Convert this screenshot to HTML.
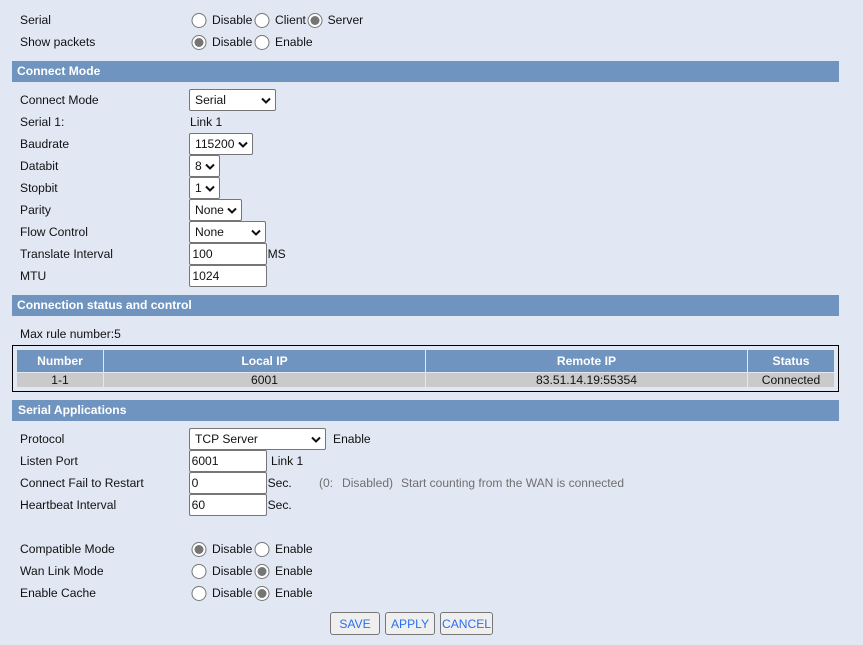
<!DOCTYPE html>
<html>
<head>
<meta charset="utf-8">
<style>
html,body{margin:0;padding:0;width:863px;height:645px;overflow:hidden;background:#e1e8f4;}
body{position:relative;font-family:"Liberation Sans","Noto Sans CJK SC",sans-serif;font-size:12.1px;color:#111;}
.t{position:absolute;line-height:22px;height:22px;white-space:pre;}
.g{color:#6f6f6f;}
.bar{position:absolute;left:12px;width:827px;height:21px;background:#6f94c0;color:#fff;font-weight:bold;line-height:20px;box-sizing:border-box;}
.r{position:absolute;width:15px;height:15px;box-sizing:border-box;border-radius:50%;border:1px solid #767676;background:#fff;transform:translateX(-.5px);}
.r.on::after{content:"";position:absolute;left:2px;top:2px;width:9px;height:9px;border-radius:50%;background:#757575;}
.s,.i{position:absolute;box-sizing:border-box;border:1px solid #767676;border-radius:2px;background:#fff;height:22px;line-height:20px;white-space:pre;}
.s{padding-left:5px;}
.i{padding-left:2.4px;}
.s svg{position:absolute;top:7px;right:3px;}
.b{position:absolute;top:612px;height:23px;box-sizing:border-box;border:1px solid #767676;border-radius:3px;background:#efefef;color:#2a6ff0;text-align:center;line-height:22px;white-space:pre;}
#tbl{position:absolute;left:12px;top:345px;width:827px;height:47px;box-sizing:border-box;border:1px solid #000;}
.c{position:absolute;text-align:center;white-space:pre;}
.h{top:350px;height:22px;line-height:22px;background:#6f94c0;color:#fff;font-weight:bold;}
.d{top:373px;height:14px;line-height:14px;background:#cacaca;}
</style>
</head>
<body>
<div class="t" style="left:20px;top:9px">Serial</div>
<span class="r" style="left:192px;top:13px"></span><div class="t" style="left:212px;top:9px">Disable</div>
<span class="r" style="left:255px;top:13px"></span><div class="t" style="left:275px;top:9px">Client</div>
<span class="r on" style="left:308px;top:13px"></span><div class="t" style="left:327.6px;top:9px">Server</div>

<div class="t" style="left:20px;top:31px">Show packets</div>
<span class="r on" style="left:192px;top:35px"></span><div class="t" style="left:212px;top:31px">Disable</div>
<span class="r" style="left:255px;top:35px"></span><div class="t" style="left:275px;top:31px">Enable</div>

<div class="bar" style="top:61px;padding-left:5px">Connect Mode</div>

<div class="t" style="left:20px;top:89px">Connect Mode</div>
<div class="s" style="left:189px;top:89px;width:87px">Serial<svg width="12" height="8" viewBox="0 0 12 8"><path d="M2 1.5 L6 5.5 L10 1.5" fill="none" stroke="#111" stroke-width="2"/></svg></div>
<div class="t" style="left:20px;top:111px">Serial 1:</div>
<div class="t" style="left:190px;top:111px">Link 1</div>
<div class="t" style="left:20px;top:133px">Baudrate</div>
<div class="s" style="left:189px;top:133px;width:64px">115200<svg width="12" height="8" viewBox="0 0 12 8"><path d="M2 1.5 L6 5.5 L10 1.5" fill="none" stroke="#111" stroke-width="2"/></svg></div>
<div class="t" style="left:20px;top:155px">Databit</div>
<div class="s" style="left:189px;top:155px;width:31px">8<svg width="12" height="8" viewBox="0 0 12 8"><path d="M2 1.5 L6 5.5 L10 1.5" fill="none" stroke="#111" stroke-width="2"/></svg></div>
<div class="t" style="left:20px;top:177px">Stopbit</div>
<div class="s" style="left:189px;top:177px;width:31px">1<svg width="12" height="8" viewBox="0 0 12 8"><path d="M2 1.5 L6 5.5 L10 1.5" fill="none" stroke="#111" stroke-width="2"/></svg></div>
<div class="t" style="left:20px;top:199px">Parity</div>
<div class="s" style="left:189px;top:199px;width:53px">None<svg width="12" height="8" viewBox="0 0 12 8"><path d="M2 1.5 L6 5.5 L10 1.5" fill="none" stroke="#111" stroke-width="2"/></svg></div>
<div class="t" style="left:20px;top:221px">Flow Control</div>
<div class="s" style="left:189px;top:221px;width:77px">None<svg width="12" height="8" viewBox="0 0 12 8"><path d="M2 1.5 L6 5.5 L10 1.5" fill="none" stroke="#111" stroke-width="2"/></svg></div>
<div class="t" style="left:20px;top:243px">Translate Interval</div>
<div class="i" style="left:189px;top:243px;width:78px">100</div>
<div class="t" style="left:267.6px;top:243px">MS</div>
<div class="t" style="left:20px;top:265px">MTU</div>
<div class="i" style="left:189px;top:265px;width:78px">1024</div>

<div class="bar" style="top:295px;padding-left:5px">Connection status and control</div>

<div class="t" style="left:20px;top:323px">Max rule number:5</div>

<div id="tbl"></div>
<div class="c h" style="left:17px;width:86px">Number</div>
<div class="c h" style="left:104px;width:321px">Local IP</div>
<div class="c h" style="left:426px;width:321px">Remote IP</div>
<div class="c h" style="left:748px;width:86px">Status</div>
<div class="c d" style="left:17px;width:86px">1-1</div>
<div class="c d" style="left:104px;width:321px">6001</div>
<div class="c d" style="left:426px;width:321px">83.51.14.19:55354</div>
<div class="c d" style="left:748px;width:86px">Connected</div>

<div class="bar" style="top:400px;padding-left:6px">Serial Applications</div>

<div class="t" style="left:20px;top:428px">Protocol</div>
<div class="s" style="left:189px;top:428px;width:137px">TCP Server<svg width="12" height="8" viewBox="0 0 12 8"><path d="M2 1.5 L6 5.5 L10 1.5" fill="none" stroke="#111" stroke-width="2"/></svg></div>
<div class="t" style="left:333px;top:428px">Enable</div>
<div class="t" style="left:20px;top:450px">Listen Port</div>
<div class="i" style="left:189px;top:450px;width:78px;padding-left:1.6px">6001</div>
<div class="t" style="left:271px;top:450px">Link 1</div>
<div class="t" style="left:20px;top:472px">Connect Fail to Restart</div>
<div class="i" style="left:189px;top:472px;width:78px;padding-left:1.6px">0</div>
<div class="t" style="left:267.6px;top:472px">Sec.</div>
<div class="t g" style="left:319px;top:472px">(0:</div>
<div class="t g" style="left:342px;top:472px">Disabled)</div>
<div class="t g" style="left:401px;top:472px;font-size:12px">Start counting from the WAN is connected</div>
<div class="t" style="left:20px;top:494px">Heartbeat Interval</div>
<div class="i" style="left:189px;top:494px;width:78px;padding-left:1.6px">60</div>
<div class="t" style="left:267.6px;top:494px">Sec.</div>

<div class="t" style="left:20px;top:538px">Compatible Mode</div>
<span class="r on" style="left:192px;top:542px"></span><div class="t" style="left:212px;top:538px">Disable</div>
<span class="r" style="left:255px;top:542px"></span><div class="t" style="left:275px;top:538px">Enable</div>
<div class="t" style="left:20px;top:560px">Wan Link Mode</div>
<span class="r" style="left:192px;top:564px"></span><div class="t" style="left:212px;top:560px">Disable</div>
<span class="r on" style="left:255px;top:564px"></span><div class="t" style="left:275px;top:560px">Enable</div>
<div class="t" style="left:20px;top:582px">Enable Cache</div>
<span class="r" style="left:192px;top:586px"></span><div class="t" style="left:212px;top:582px">Disable</div>
<span class="r on" style="left:255px;top:586px"></span><div class="t" style="left:275px;top:582px">Enable</div>

<div class="b" style="left:330px;width:50px">SAVE</div>
<div class="b" style="left:385px;width:50px">APPLY</div>
<div class="b" style="left:440px;width:53px">CANCEL</div>
</body>
</html>
